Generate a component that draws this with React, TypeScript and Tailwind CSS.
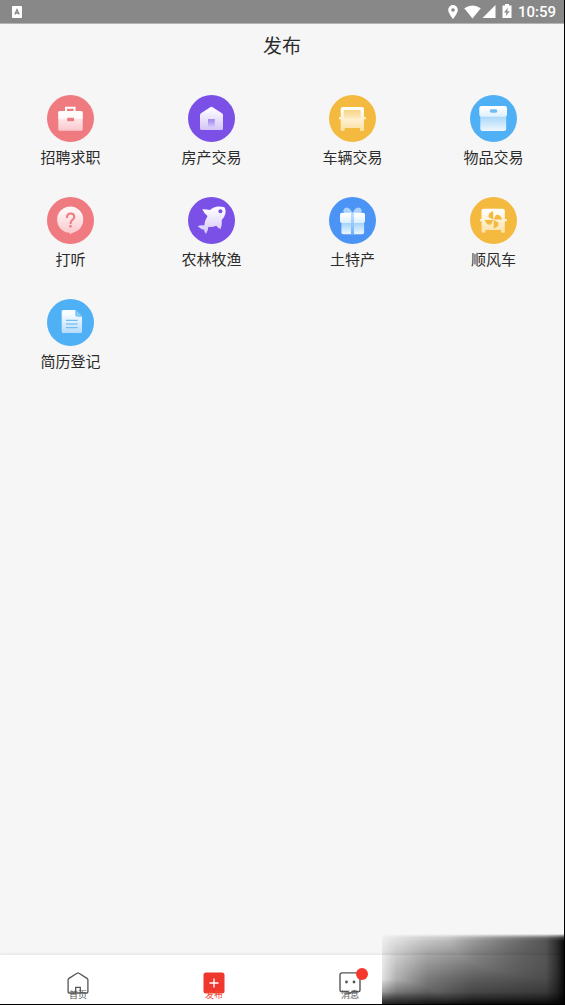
import type { ReactNode } from "react";

type Category = { name: string; color: string; icon: ReactNode };

const CATEGORIES: Category[] = [
  {
    name: "招聘求职",
    color: "#ef7a7f",
    icon: (
      <>
        <path d="M19 17v-4.2h8.6V17" fill="none" stroke="#fff" strokeWidth="2" />
        <rect x="11.3" y="16" width="24.4" height="19.7" rx="1.5" fill="url(#fade-red)" />
        <path d="M12.8 16h21.4q1.5 0 1.5 1.5v6.2H11.3v-6.2q0-1.5 1.5-1.5z" fill="#fff" fillOpacity=".7" />
        <rect x="20.2" y="22.7" width="6.8" height="3.6" rx=".8" fill="#ef7a7f" />
      </>
    ),
  },
  {
    name: "房产交易",
    color: "#7b50e6",
    icon: (
      <>
        <path d="M22.2 12.2q1.2-.9 2.4 0l9.4 6.1q1 .7 1 1.9v13.3q0 1.5-1.5 1.5h-20q-1.5 0-1.5-1.5V20.2q0-1.2 1-1.9z" fill="url(#fade-purple)" />
        <rect x="20" y="24" width="6.8" height="8.3" fill="url(#door)" />
      </>
    ),
  },
  {
    name: "车辆交易",
    color: "#f4ba40",
    icon: (
      <>
        <path d="M14 12h19q2 0 2 2v8h1.8v2.3H35V35q0 1-1 1h-2q-1 0-1-1v-2H15.7v2q0 1-1 1h-2q-1 0-1-1V24.3H10V22h1.7v-8q0-2 2.3-2z" fill="url(#fade-yellow)" />
        <rect x="14.7" y="15" width="17" height="9" rx="1" fill="url(#glass)" />
      </>
    ),
  },
  {
    name: "物品交易",
    color: "#4fb0f5",
    icon: (
      <>
        <path d="M10.3 19h25.9v14.8q0 2.2-2.2 2.2H12.5q-2.2 0-2.2-2.2z" fill="url(#fade-box)" />
        <path d="M11.5 11h23.3q2.2 0 2.2 2.2v6.3q0 2.3-2.2 2.3H11.5q-2.2 0-2.2-2.3v-6.3q0-2.2 2.2-2.2z" fill="url(#fade-sky)" />
        <rect x="19.7" y="14.3" width="7.7" height="3.5" rx="1.7" fill="#6fbdf4" />
      </>
    ),
  },
  {
    name: "打听",
    color: "#ef7a7f",
    icon: (
      <>
        <path d="M23.3 9.5a13.2 13.2 0 0 1 3.4 25.9q-2 .5-3.7 2l-.4-1.6A13.2 13.2 0 0 1 10.1 22.700 13.200 13.200 0 0 1 23.300 9.500z" fill="url(#fade-red)" />
        <path d="M20 20.2q0-3.7 3.6-3.7t3.6 3.3q0 1.7-1.7 3t-1.9 3.5" fill="none" stroke="#ef7a7f" strokeWidth="2" strokeLinecap="round" />
        <circle cx="23.5" cy="29.3" r="1.3" fill="#ef7a7f" />
      </>
    ),
  },
  {
    name: "农林牧渔",
    color: "#7b50e6",
    icon: (
      <>
        <path d="M14.3 12.2q4-.2 7.7.9Q26 9.4 30.5 9.500q4.300 0 6.200 1 1.300 2.800.6 6.500-.8 3.200-3.500 6 .4 5-1.200 9-2.600-.6-4.400-3.200-4 1.700-7.800 1-.2 3.800-2.400 7.200-1.700-2-2-4.300-3.200-.4-6.300-3.400 3-1.500 6.600-.7.200-4.800 3.200-9.600-3.200-2-5.200-6.800z" fill="url(#fade-purple)" />
        <circle cx="32.4" cy="14.3" r="2" fill="#7b50e6" />
      </>
    ),
  },
  {
    name: "土特产",
    color: "#4b94f6",
    icon: (
      <>
        <path d="M23.5 17q-1.5-6-5.5-6.6-3.300 0-3.800 3.600l1.800 3zM23.500 17q1.500-6 5.500-6.600 3.300 0 3.800 3.600l-1.800 3z" fill="#a9d3fb" />
        <path d="M12.4 24.5h22.7v10.8q0 2-2 2H14.4q-2 0-2-2z" fill="url(#fade-gift)" />
        <rect x="11" y="15.7" width="25" height="10.2" rx="2" fill="url(#fade-sky)" />
        <rect x="22" y="15.7" width="3" height="21.6" fill="url(#ribbon)" />
      </>
    ),
  },
  {
    name: "顺风车",
    color: "#f4ba40",
    icon: (
      <>
        <path d="M13.3 11.800h19.500q2 0 2 2V22h2v2.300h-2v10.500q0 1-1 1H32q-1 0-1-1V33H15.500v1.800q0 1-1 1h-1.900q-1 0-1-1V24.300H10V22h1.500v-8.200q0-2 1.800-2z" fill="url(#fade-yellow)" />
        <g fill="#f4ba40">
          <path d="M23.200 22.600V14q-5.600 2-4.600 6.200z" />
          <path d="M23.600 22.500h8.600q-2-5.600-6.200-4.600z" />
          <path d="M23.700 23v8.600q5.600-2 4.600-6.200z" />
          <path d="M23.300 23.100h-8.600q2 5.600 6.200 4.600z" />
        </g>
      </>
    ),
  },
  {
    name: "简历登记",
    color: "#4fb0f5",
    icon: (
      <>
        <path d="M16.2 11h12.5l6.3 6.3v15.200q0 1.500-1.500 1.500H16.200q-1.500 0-1.500-1.500v-20q0-1.500 1.500-1.500z" fill="url(#fade-doc)" />
        <path d="M28.700 11l6.300 6.300h-4.800q-1.500 0-1.500-1.500z" fill="#8acbf8" stroke="#4fb0f5" strokeWidth=".6" />
        <path d="M19 21.300h11.700M19 25h11.700M19 28.700h11.700" stroke="#5cb2ee" strokeWidth="1" />
      </>
    ),
  },
];

const FADES = [
  { id: "fade-red", from: "#fff5f5", to: "#fac6cb" },
  { id: "fade-purple", from: "#fbf9ff", to: "#d3c5f8" },
  { id: "fade-yellow", from: "#fffdf8", to: "#fbdf9f" },
  { id: "fade-sky", from: "#ffffff", to: "#dceffe" },
  { id: "fade-box", from: "#a9d7f9", to: "#eef8ff" },
  { id: "fade-gift", from: "#a5d4fb", to: "#eef8ff" },
  { id: "fade-doc", from: "#fafdff", to: "#b4dcfa" },
  { id: "door", from: "#a78df0", to: "#d8cbf9" },
  { id: "glass", from: "#f9d68c", to: "#fdecc4" },
  { id: "ribbon", from: "#b9dbfc", to: "#6fb3f7" },
];

function StatusBar() {
  return (
    <div className="flex h-6 items-center justify-between border-b border-[#b4b4b4] bg-[#888] pr-2 pl-3">
      <svg width="10" height="12" viewBox="0 0 10 12">
        <rect width="10" height="12" rx="1" fill="#fff" />
        <path d="M2.800 8.500L5 3.500l2.200 5M3.500 7h3" fill="none" stroke="#888" strokeWidth="1.300" />
      </svg>
      <div className="flex items-center gap-[5px]">
        <svg width="65" height="16" viewBox="0 0 65 16" fill="#fff">
          <path fillRule="evenodd" d="M5 1a4.800 4.800 0 0 1 4.800 4.800C9.800 9.500 5 15 5 15S.2 9.500.2 5.800A4.800 4.800 0 0 1 5 1zm0 3.200a1.800 1.800 0 1 0 0 3.600 1.800 1.800 0 0 0 0-3.600z" />
          <path d="M16.200 4.200q8.300-5.400 16.600 0L24.500 14.500z" />
          <path d="M47.500 1v13h-13z" />
          <path fillRule="evenodd" d="M57 0h4v1.500h2.500V14h-9V1.500H57zM60 3.500l-4 5h2.500l-.8 3.700 4-5h-2.500z" />
        </svg>
        <time className="font-[Roboto,sans-serif] text-[15px] leading-5 font-medium text-white">10:59</time>
      </div>
    </div>
  );
}

function Tab({ label, active, children }: { label: string; active?: boolean; children: ReactNode }) {
  return (
    <button
      className={
        active
          ? "flex flex-1 flex-col items-center text-[#ee4a30]"
          : "flex flex-1 flex-col items-center text-[#555]"
      }
    >
      {children}
      {/* the label rides up over the foot of the icon */}
      <span className="-mt-[5px] text-[9px] leading-3">{label}</span>
    </button>
  );
}

export default function App() {
  return (
    <div className="relative flex min-h-screen flex-col border-r border-b border-black bg-[#f6f6f6] font-['Noto_Sans_CJK_SC',sans-serif] text-[#2b2b2b]">
      <svg width="0" height="0" className="absolute">
        <defs>
          {FADES.map((f) => (
            <linearGradient key={f.id} id={f.id} x1="0" y1="0" x2="0" y2="1">
              <stop offset="0.15" stopColor={f.from} />
              <stop offset="1" stopColor={f.to} />
            </linearGradient>
          ))}
        </defs>
      </svg>

      <StatusBar />

      <header className="flex h-[42px] items-center justify-center">
        <h1 className="text-[19px] leading-7">发布</h1>
      </header>

      <main className="flex-1 pt-[29px]">
        <div className="grid grid-cols-4 gap-y-[30px]">
          {CATEGORIES.map((c) => (
            <button key={c.name} className="flex flex-col items-center gap-[5px]">
              <svg width="47" height="47" viewBox="0 0 47 47">
                <circle cx="23.5" cy="23.5" r="23.5" fill={c.color} />
                {c.icon}
              </svg>
              <span className="text-[15px] leading-5">{c.name}</span>
            </button>
          ))}
        </div>
      </main>

      <nav className="flex h-[49px] items-start bg-white px-[10px] pt-[17px] shadow-[0_-1px_3px_rgba(0,0,0,0.08)]">
        <Tab label="首页">
          <svg width="22" height="22" viewBox="0 0 22 22" fill="none" stroke="#555" strokeWidth="1.300">
            <path d="M10 1.200q1-.7 2 0l8 5.200q.9.600.9 1.700v11.700q0 1.200-1.200 1.200H2.300q-1.200 0-1.200-1.200V8.100q0-1.100.9-1.700z" />
            <path d="M8.700 21v-5.700h4.600V21" />
          </svg>
        </Tab>
        <Tab label="发布" active>
          <svg width="22" height="22" viewBox="0 0 22 22">
            <rect x=".5" y=".5" width="21" height="21" rx="2.500" fill="#ef372d" />
            <path d="M11 6.500v9M6.500 11h9" stroke="#fff" strokeWidth="1.400" />
          </svg>
        </Tab>
        <Tab label="消息">
          <span className="relative">
            <svg width="22" height="22" viewBox="0 0 22 22" fill="none" stroke="#555" strokeWidth="1.400">
              <path d="M3 .9h16q2 0 2 2v14.800q0 2-2 2h-5.800L11 21.500l-2.200-1.800H3q-2 0-2-2V2.900q0-2 2-2z" />
              <circle cx="7.500" cy="10" r=".7" fill="#333" />
              <circle cx="15" cy="10" r=".7" fill="#333" />
            </svg>
            <span className="absolute -top-1 -right-[7px] size-3 rounded-full bg-[#f5372c]" />
          </span>
        </Tab>
        <div className="flex-1" />
      </nav>

      {/* shaded patch over the last tab */}
      <div className="absolute right-0 bottom-0 h-[70px] w-[182px]">
        <div className="absolute inset-0 bg-[linear-gradient(to_bottom,transparent_0%,rgba(0,0,0,0.14)_5%,rgba(0,0,0,0.36)_30%,rgba(0,0,0,0.58)_65%,rgba(0,0,0,0.72)_92%,rgba(0,0,0,0.85)_100%)] [mask-image:linear-gradient(to_right,rgba(0,0,0,0.2)_0%,rgba(0,0,0,0.55)_8%,rgba(0,0,0,0.85)_25%,#000_50%)]" />
        <div className="absolute inset-0 bg-[linear-gradient(to_right,transparent_10%,rgba(0,0,0,0.18)_60%,rgba(0,0,0,0.3)_90%,rgba(0,0,0,0.6)_96%,rgba(0,0,0,0.9)_100%)] [mask-image:linear-gradient(to_bottom,transparent,#000_10%)]" />
        <div className="absolute inset-0 bg-[radial-gradient(ellipse_at_bottom_left,rgba(0,0,0,0.55)_0%,transparent_25%)]" />
        <div className="absolute inset-0 bg-[radial-gradient(ellipse_at_top_right,rgba(0,0,0,0.5)_0%,transparent_45%)] [mask-image:linear-gradient(to_bottom,transparent,#000_6%)]" />
        <div className="absolute inset-x-0 bottom-0 h-3 bg-linear-to-b from-transparent to-black/60" />
      </div>
    </div>
  );
}
